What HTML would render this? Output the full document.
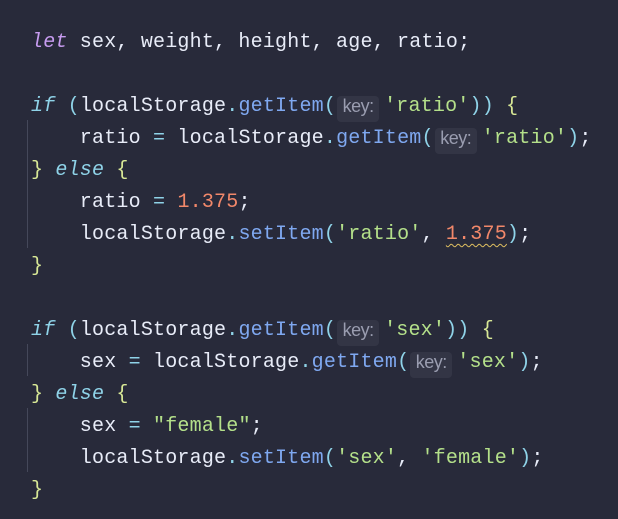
<html><head><style>
body{margin:0;background:#282a3a;width:618px;height:519px;overflow:hidden}
pre{margin:0;position:absolute;left:31px;top:27px;font:20px/32px "Liberation Mono",monospace;color:#e8ecf8;letter-spacing:0.2px}
.k{color:#c79cf0;font-style:italic}.c{color:#8fd3e8;font-style:italic}
.f{color:#7fa8f0}.s{color:#b4e08a}.n{color:#f2886a}.p{color:#8fd3e8}.b{color:#d8e896}.o{color:#8fd3e8}
.h{display:inline-block;width:42px;height:26px;line-height:26px;background:#333545;color:#9a9db0;font:18px "Liberation Sans",sans-serif;text-align:center;border-radius:4px;margin:0 5px 0 1px;vertical-align:-1px;letter-spacing:-0.5px}
.w{text-decoration:underline wavy #e0c060;text-underline-offset:4px;text-decoration-thickness:1px}
.g{position:absolute;left:27px;width:1px;background:#45485a}
</style></head><body>
<div class="g" style="top:120px;height:64px"></div>
<div class="g" style="top:184px;height:64px"></div>
<div class="g" style="top:344px;height:32px"></div>
<div class="g" style="top:408px;height:64px"></div>
<pre><span class="k">let</span> sex, weight, height, age, ratio;

<span class="c">if</span> <span class="p">(</span>localStorage<span class="o">.</span><span class="f">getItem</span><span class="p">(</span><span class="h">key:</span><span class="s">'ratio'</span><span class="p">))</span> <span class="b">{</span>
    ratio <span class="o">=</span> localStorage<span class="o">.</span><span class="f">getItem</span><span class="p">(</span><span class="h">key:</span><span class="s">'ratio'</span><span class="p">)</span>;
<span class="b">}</span> <span class="c">else</span> <span class="b">{</span>
    ratio <span class="o">=</span> <span class="n">1.375</span>;
    localStorage<span class="o">.</span><span class="f">setItem</span><span class="p">(</span><span class="s">'ratio'</span>, <span class="n w">1.375</span><span class="p">)</span>;
<span class="b">}</span>

<span class="c">if</span> <span class="p">(</span>localStorage<span class="o">.</span><span class="f">getItem</span><span class="p">(</span><span class="h">key:</span><span class="s">'sex'</span><span class="p">))</span> <span class="b">{</span>
    sex <span class="o">=</span> localStorage<span class="o">.</span><span class="f">getItem</span><span class="p">(</span><span class="h">key:</span><span class="s">'sex'</span><span class="p">)</span>;
<span class="b">}</span> <span class="c">else</span> <span class="b">{</span>
    sex <span class="o">=</span> <span class="s">"female"</span>;
    localStorage<span class="o">.</span><span class="f">setItem</span><span class="p">(</span><span class="s">'sex'</span>, <span class="s">'female'</span><span class="p">)</span>;
<span class="b">}</span></pre>
</body></html>
